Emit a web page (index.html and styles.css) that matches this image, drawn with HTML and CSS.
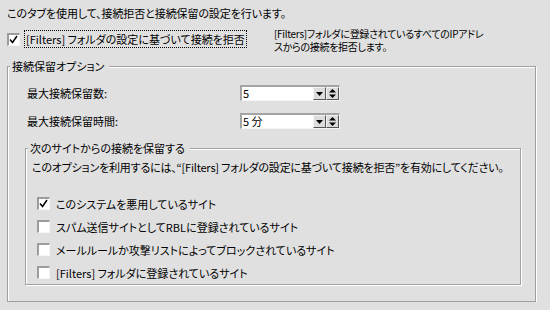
FILE: index.html
```html
<!DOCTYPE html>
<html>
<head>
    <meta charset="utf-8" />
    <title>接続保留</title>
    <link rel="stylesheet" href="styles.css">
</head>
<body>
    <div class="page">
        <p class="intro">このタブを使用して、接続拒否と接続保留の設定を行います。</p>

        <!-- 上段: 拒否チェック + 説明 -->
        <div class="top-row">
            <label class="check check-main">
                <span class="box"><svg width="11" height="11" viewBox="0 0 11 11"><polyline points="2,5.5 4.5,8.5 9,2" fill="none" stroke="#000" stroke-width="1.5"/></svg></span>
                <span class="focus-text">[Filters] フォルダの設定に基づいて接続を拒否</span>
            </label>
            <p class="desc">[Filters]フォルダに登録されているすべてのIPアドレ<br>スからの接続を拒否します。</p>
        </div>

        <fieldset class="group group-outer">
            <legend>接続保留オプション</legend>
            <div class="outer-body">
                <div class="field-row">
                    <span class="field-label">最大接続保留数:</span>
                    <div class="combo">
                        <span class="combo-value">5</span>
                        <span class="combo-btn"><svg width="7" height="4" viewBox="0 0 7 4"><polygon points="0,0 7,0 3.5,4" fill="#000"/></svg></span>
                        <span class="combo-btn"><svg width="7" height="9" viewBox="0 0 7 9"><polygon points="3.5,0 7,3.5 0,3.5" fill="#000"/><polygon points="0,5.5 7,5.5 3.5,9" fill="#000"/></svg></span>
                    </div>
                </div>
                <div class="field-row">
                    <span class="field-label">最大接続保留時間:</span>
                    <div class="combo">
                        <span class="combo-value">5 分</span>
                        <span class="combo-btn"><svg width="7" height="4" viewBox="0 0 7 4"><polygon points="0,0 7,0 3.5,4" fill="#000"/></svg></span>
                        <span class="combo-btn"><svg width="7" height="9" viewBox="0 0 7 9"><polygon points="3.5,0 7,3.5 0,3.5" fill="#000"/><polygon points="0,5.5 7,5.5 3.5,9" fill="#000"/></svg></span>
                    </div>
                </div>

                <fieldset class="group group-inner">
                    <legend>次のサイトからの接続を保留する</legend>
                    <p class="note">このオプションを利用するには、“[Filters] フォルダの設定に基づいて接続を拒否”を有効にしてください。</p>
                    <ul class="check-list">
                        <li class="check"><span class="box"><svg width="11" height="11" viewBox="0 0 11 11"><polyline points="2,5.5 4.5,8.5 9,2" fill="none" stroke="#000" stroke-width="1.5"/></svg></span>このシステムを悪用しているサイト</li>
                        <li class="check"><span class="box"></span>スパム送信サイトとしてRBLに登録されているサイト</li>
                        <li class="check"><span class="box"></span>メールルールか攻撃リストによってブロックされているサイト</li>
                        <li class="check"><span class="box"></span>[Filters] フォルダに登録されているサイト</li>
                    </ul>
                </fieldset>
            </div>
        </fieldset>
    </div>
</body>
</html>
```

FILE: styles.css
```css
/* 全体 */
body {
    margin: 0;
    background-color: #e0e0e0;
    font-family: "Noto Sans CJK JP", "Liberation Sans", sans-serif;
    font-size: 11px;
    font-feature-settings: "palt";
    color: #000;
}

.page {
    padding: 6px 0 0 7px;
    width: 543px;
}

p {
    margin: 0;
}

.intro {
    line-height: 14px;
    margin-bottom: 8px;
    letter-spacing: -0.1px;
}

/* 上段 */
.top-row {
    display: flex;
}

.check {
    display: flex;
    align-items: center;
}

.check-main {
    width: 267px;
    margin-top: 2px;
    align-self: flex-start;
    gap: 4px;
}

.focus-text {
    line-height: 16px;
    padding: 0 1px;
    border: 1px dotted #000;
}

.desc {
    font-size: 10px;
    letter-spacing: -0.3px;
    line-height: 13px;
    margin-top: -1px;
}

/* チェックボックス */
.box {
    width: 13px;
    height: 13px;
    box-sizing: border-box;
    background-color: #fff;
    border-top: 2px solid #9c9c9c;
    border-left: 2px solid #9c9c9c;
    border-right: 1px solid #f6f6f6;
    border-bottom: 1px solid #f6f6f6;
    display: flex;
    flex-shrink: 0;
}

.box svg {
    margin: -1px 0 0 -1px;
}

/* グループボックス */
.group {
    margin: 0;
    padding: 0;
    border: 1px solid #a0a0a0;
    box-shadow: inset 1px 1px 0 #fff, 1px 1px 0 #fff;
}

.group legend {
    line-height: 14px;
    padding: 0 5px 0 2px;
    margin-left: 2px;
    background-color: #e0e0e0;
}

.group-outer {
    margin-top: 6px;
    width: 529px;
    box-sizing: border-box;
}

.outer-body {
    padding: 12px 14px 16px 17px;
}

.field-row {
    display: flex;
    align-items: center;
    height: 16px;
    padding-left: 2px;
    margin-bottom: 12px;
}

.field-label {
    width: 213px;
}

/* コンボボックス */
.combo {
    display: flex;
    height: 16px;
    box-sizing: border-box;
    border-top: 2px solid #a4a4a4;
    border-left: 2px solid #a4a4a4;
    border-right: 1px solid #f4f4f4;
    border-bottom: 1px solid #f4f4f4;
}

.combo-value {
    width: 70px;
    background-color: #fff;
    line-height: 13px;
    padding-left: 1px;
}

.combo-btn {
    width: 13px;
    box-sizing: border-box;
    background-color: #dcdcdc;
    border-top: 1px solid #f4f4f4;
    border-left: 1px solid #f4f4f4;
    border-right: 1px solid #555;
    border-bottom: 1px solid #555;
    display: flex;
    align-items: center;
    justify-content: center;
}

/* 内側グループ */
.group-inner {
    margin-top: 0;
}

.note {
    line-height: 14px;
    padding: 5px 0 0 6px;
    letter-spacing: -0.2px;
}

.check-list {
    list-style: none;
    margin: 18px 0 0;
    padding: 0 0 0 11px;
}

.check-list li {
    height: 23px;
    gap: 6px;
}
```
